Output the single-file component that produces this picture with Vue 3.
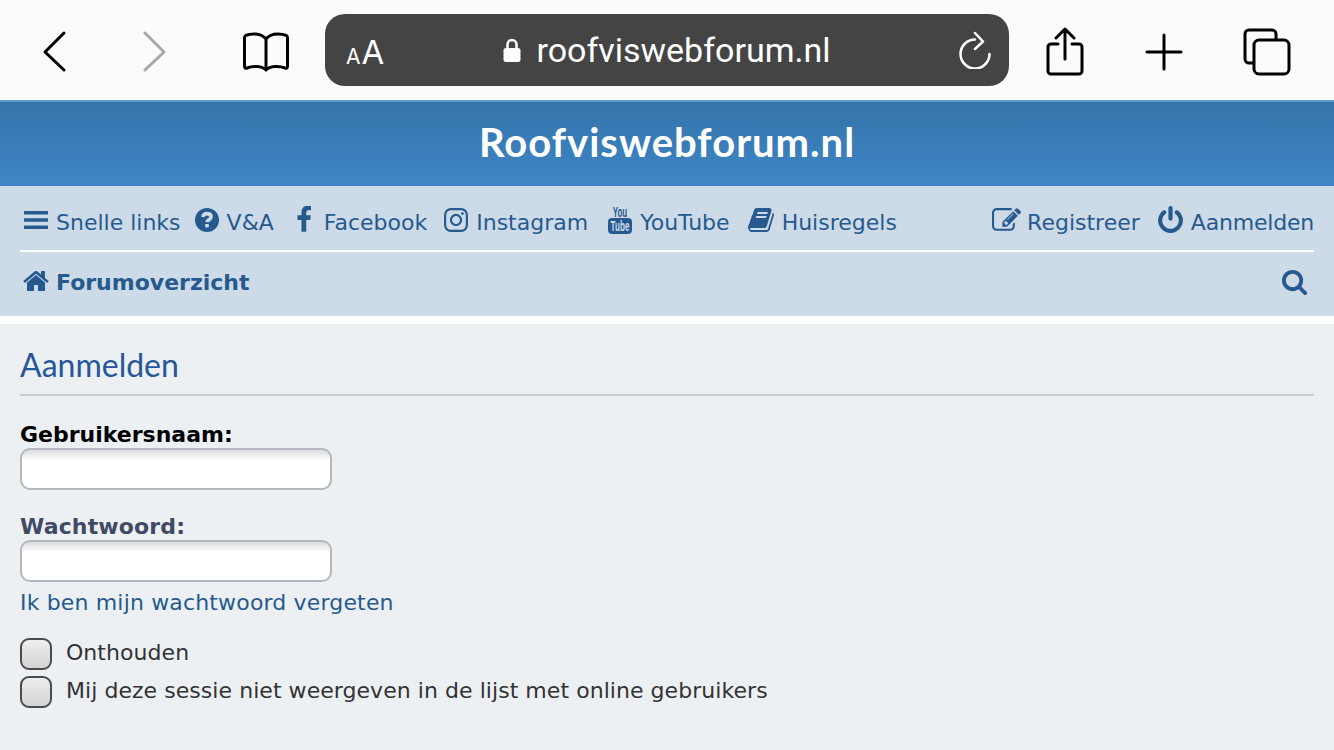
<template>
  <div class="page">
    <div class="toolbar">
      <button class="tool back">
        <svg width="30" height="44" viewBox="0 0 30 44"><path d="M22 3 L3 22 L22 40" /></svg>
      </button>
      <button class="tool forward">
        <svg width="30" height="44" viewBox="0 0 30 44"><path d="M3 3 L22 22 L3 40" /></svg>
      </button>
      <button class="tool book">
        <svg width="46" height="40" viewBox="0 0 46 40">
          <path d="M23 7 C20 3 16 2 11 2 C7 2 5 2.5 2.5 3.5 C1.5 4 1.5 5 1.5 6 V34 C1.5 36 2.5 36.5 4 36 C10 33.5 19 34 23 38 C27 34 36 33.5 42 36 C43.5 36.5 44.5 36 44.5 34 V6 C44.5 5 44.5 4 43.5 3.5 C41 2.5 39 2 35 2 C30 2 26 3 23 7 Z M23 7 V37" />
        </svg>
      </button>
      <div class="urlbar">
        <span class="aa"><small>A</small>A</span>
        <span class="url">
          <svg width="18" height="26" viewBox="0 0 18 26">
            <path class="shackle" d="M4.5 12 V7.5 a4.5 4.5 0 0 1 9 0 V12" />
            <rect x="0.5" y="11" width="17" height="14" rx="2.5" />
          </svg>
          roofviswebforum.nl
        </span>
        <svg class="reload" width="32" height="38" viewBox="0 0 32 38">
          <path d="M16 8.5 A14.5 14.5 0 1 0 30.5 23 M16 2 L24 10.5 L16 18" />
        </svg>
      </div>
      <button class="tool share">
        <svg width="40" height="50" viewBox="0 0 40 50">
          <path d="M13 17 H6 a3 3 0 0 0 -3 3 V44 a3 3 0 0 0 3 3 H34 a3 3 0 0 0 3 -3 V20 a3 3 0 0 0 -3 -3 H27 M20 32 V2 M11 11 L20 2 L29 11" />
        </svg>
      </button>
      <button class="tool plus">
        <svg width="38" height="38" viewBox="0 0 38 38"><path d="M19 2 V36 M2 19 H36" /></svg>
      </button>
      <button class="tool tabs">
        <svg width="48" height="48" viewBox="0 0 48 48">
          <path d="M10 35 H6 a4 4 0 0 1 -4 -4 V6 a4 4 0 0 1 4 -4 H29 a4 4 0 0 1 4 4 V11" />
          <rect x="11" y="12" width="35" height="34" rx="5" />
        </svg>
      </button>
    </div>

    <header class="banner">Roofviswebforum.nl</header>

    <nav class="navbar">
      <div class="navrow top">
        <ul class="links">
          <li v-for="item in leftLinks" :key="item.label" :style="{ marginRight: item.after + 'px', gap: item.gap + 'px' }">
            <svg v-if="item.path" class="icon" :style="{ width: item.size + 'px', height: item.size + 'px' }" viewBox="0 0 1792 1792"><path :d="item.path" /></svg>
            <svg v-else-if="item.label === 'V&A'" class="icon" width="24" height="24" viewBox="0 0 24 24">
              <circle cx="12" cy="12" r="12" />
              <path class="q" d="M7.8 9 c0.5 -2.4 2.2 -3.4 4.2 -3.4 c2.4 0 4 1.3 4 3.3 c0 3 -3.7 2.8 -4 5.2" />
              <rect class="qdot" x="10.2" y="16" width="3.6" height="3.4" />
            </svg>
            <svg v-else class="icon" width="24" height="28" viewBox="0 0 24 28">
              <text class="yt-you" transform="translate(12 11) scale(.57 1)" text-anchor="middle">You</text>
              <rect x="0" y="12" width="24" height="16" rx="4" />
              <text class="yt-tube" transform="translate(12 25) scale(.58 1)" text-anchor="middle">Tube</text>
            </svg>
            <span>{{ item.label }}</span>
          </li>
        </ul>
        <ul class="links right">
          <li v-for="item in rightLinks" :key="item.label" :style="{ gap: item.gap + 'px' }">
            <svg class="icon" :style="{ width: item.size + 'px', height: item.size + 'px' }" viewBox="0 0 1792 1792"><path :d="item.path" /></svg>
            <span :class="item.textClass">{{ item.label }}</span>
          </li>
        </ul>
      </div>
      <div class="navrow bottom">
        <a class="crumb">
          <svg class="icon" width="28" height="28" viewBox="0 0 1792 1792"><path :d="icons.home" /></svg>
          Forumoverzicht
        </a>
        <svg class="icon search" width="27" height="27" viewBox="0 0 1792 1792"><path :d="icons.search" /></svg>
      </div>
    </nav>

    <main class="content">
      <h2>Aanmelden</h2>
      <form class="login" @submit.prevent>
        <label class="field-label black">Gebruikersnaam:</label>
        <input class="text" type="text" />
        <label class="field-label slate second">Wachtwoord:</label>
        <input class="text" type="password" />
        <a class="forgot">Ik ben mijn wachtwoord vergeten</a>
        <div class="checks">
          <label v-for="c in checks" :key="c" class="check">
            <span class="box"></span>
            {{ c }}
          </label>
        </div>
      </form>
    </main>
  </div>
</template>

<script setup>
const icons = {
  facebook: 'M1343 12v264h-157q-86 0-116 36t-30 96v189h293l-39 296h-254v759h-306v-759h-255v-296h255v-218q0-186 104-288.5t277-102.5q147 0 228 12z',
  instagram: 'M1152 896q0-106-75-181t-181-75-181 75-75 181 75 181 181 75 181-75 75-181zm138 0q0 164-115 279t-279 115-279-115-115-279 115-279 279-115 279 115 115 279zm108-410q0 38-27 65t-65 27-65-27-27-65 27-65 65-27 65 27 27 65zm-502-220q-7 0-76.5-.5t-105.5 0-96.5 3-103 10-71.5 18.5q-50 20-88 58t-58 88q-11 29-18.5 71.5t-10 103-3 96.5 0 105.5.5 76.5-.5 76.5 0 105.5 3 96.5 10 103 18.5 71.5q20 50 58 88t88 58q29 11 71.5 18.5t103 10 96.5 3 105.5 0 76.5-.5 76.5.5 105.5 0 96.5-3 103-10 71.5-18.5q50-20 88-58t58-88q11-29 18.5-71.5t10-103 3-96.5 0-105.5-.5-76.5.5-76.5 0-105.5-3-96.5-10-103-18.5-71.5q-20-50-58-88t-88-58q-29-11-71.5-18.5t-103-10-96.5-3-105.5 0-76.5.5zm768 630q0 229-5 317-10 208-124 322t-322 124q-88 5-317 5t-317-5q-208-10-322-124t-124-322q-5-88-5-317t5-317q10-208 124-322t322-124q88-5 317-5t317 5q208 10 322 124t124 322q5 88 5 317z',
  book: 'M1703 478q40 57 18 129l-275 906q-19 64-76.5 107.5t-122.5 43.5h-923q-77 0-148.5-53.5t-99.5-131.5q-24-67-2-127 0-4 3-27t4-37q1-8-3-21.5t-3-19.5q2-11 8-21t16.5-23.5 16.5-23.5q23-38 45-91.5t30-91.5q3-10 .5-30t-.5-28q3-11 17-28t17-23q21-36 42-92t25-90q1-9-2.5-32t.5-28q4-13 22-30.5t22-22.5q19-26 42.5-84.5t27.5-96.5q1-8-3-25.5t-2-26.5q2-8 9-18t18-23 17-21q8-12 16.5-30.5t15-35 16-36 19.5-32 26.5-23.5 36-11.5 47.5 5.5l-1 3q38-9 51-9h761q74 0 114 56t18 130l-274 906q-36 119-71.5 153.5t-128.5 34.5h-869q-27 0-38 15-11 16-1 43 24 70 144 70h923q29 0 56-15.5t35-41.5l300-987q7-22 5-57 38 15 59 43zm-1064 2q-4 13 2 22.5t20 9.5h608q13 0 25.5-9.5t16.5-22.5l21-64q4-13-2-22.5t-20-9.5h-608q-13 0-25.5 9.5t-16.5 22.5zm-83 256q-4 13 2 22.5t20 9.5h608q13 0 25.5-9.5t16.5-22.5l21-64q4-13-2-22.5t-20-9.5h-608q-13 0-25.5 9.5t-16.5 22.5z',
  bars: 'M0 256q0-40 40-40h1712q40 0 40 40v192q0 40-40 40H40q-40 0-40-40zM0 800q0-40 40-40h1712q40 0 40 40v192q0 40-40 40H40q-40 0-40-40zM0 1344q0-40 40-40h1712q40 0 40 40v192q0 40-40 40H40q-40 0-40-40z',
  edit: 'M888 1184l116-116-152-152-116 116v56h96v96h56zm440-720q-16-16-33 1l-350 350q-17 17-1 33t33-1l350-350q17-17 1-33zm80 594v190q0 119-84.5 203.5t-203.5 84.5h-832q-119 0-203.5-84.5t-84.5-203.5v-832q0-119 84.5-203.5t203.5-84.5h832q63 0 117 25 15 7 18 23 3 17-9 29l-49 49q-14 14-32 8-23-6-45-6h-832q-66 0-113 47t-47 113v832q0 66 47 113t113 47h832q66 0 113-47t47-113v-126q0-13 9-22l64-64q15-15 35-7t20 29zm-96-738l288 288-672 672h-288v-288zm444 132l-92 92-288-288 92-92q28-28 68-28t68 28l152 152q28 28 28 68t-28 68z',
  power: 'M1664 896q0 156-61 298t-164 245-245 164-298 61-298-61-245-164-164-245-61-298q0-182 80.5-343t226.5-270q43-32 95.5-25t83.5 50q32 42 24.5 94.5t-49.5 84.5q-98 74-151.5 181t-53.5 228q0 104 40.5 198.5t109.5 163.5 163.5 109.5 198.5 40.5 198.5-40.5 163.5-109.5 109.5-163.5 40.5-198.5q0-121-53.5-228t-151.5-181q-42-32-49.5-84.5t24.5-94.5q31-43 84-50t95 25q146 109 226.5 270t80.5 343zm-640-768v640q0 52-38 90t-90 38-90-38-38-90v-640q0-52 38-90t90-38 90 38 38 90z',
  home: 'M1472 992v480q0 26-19 45t-45 19h-384v-384h-256v384h-384q-26 0-45-19t-19-45v-480q0-1 .5-3t.5-3l575-474 575 474q1 2 1 6zm223-69l-62 74q-8 9-21 11h-3q-13 0-21-7l-692-577-692 577q-12 8-24 7-13-2-21-11l-62-74q-8-10-7-23.5t11-21.5l719-599q32-26 76-26t76 26l244 204v-195q0-14 9-23t23-9h192q14 0 23 9t9 23v408l219 182q10 8 11 21.5t-7 23.5z',
  search: 'M1216 832q0-185-131.5-316.5t-316.5-131.5-316.5 131.5-131.5 316.5 131.5 316.5 316.5 131.5 316.5-131.5 131.5-316.5zm512 832q0 52-38 90t-90 38q-54 0-90-38l-343-342q-179 124-399 124-143 0-273.5-55.5t-225-150-150-225-55.5-273.5 55.5-273.5 150-225 225-150 273.5-55.5 273.5 55.5 225 150 150 225 55.5 273.5q0 220-124 399l343 343q37 37 37 90z'
}

// gap = icon to text, after = space to the next item
const leftLinks = [
  { label: 'Snelle links', path: icons.bars, size: 24, gap: 8, after: 14 },
  { label: 'V&A', gap: 8, after: 16 },
  { label: 'Facebook', path: icons.facebook, size: 28, gap: 6, after: 15 },
  { label: 'Instagram', path: icons.instagram, size: 28, gap: 6, after: 20 },
  { label: 'YouTube', gap: 8, after: 17 },
  { label: 'Huisregels', path: icons.book, size: 28, gap: 7, after: 0 }
]

const rightLinks = [
  { label: 'Registreer', path: icons.edit, size: 29, gap: 6 },
  { label: 'Aanmelden', path: icons.power, size: 29, gap: 6, textClass: 'tight' }
]

const checks = ['Onthouden', 'Mij deze sessie niet weergeven in de lijst met online gebruikers']
</script>

<style>
html, body {
  margin: 0;
  background: #ecf0f3;
}
</style>

<style scoped>
.page {
  width: 1334px;
  height: 750px;
  overflow: hidden;
  display: flex;
  flex-direction: column;
  font-family: "DejaVu Sans", Verdana, sans-serif;
  background: #fff;
}
.toolbar {
  height: 100px;
  flex: none;
  box-sizing: border-box;
  background: #fafbfb;
  display: flex;
  align-items: center;
  position: relative;
}
.tool {
  border: 0;
  padding: 0;
  margin-top: 3px;
  background: none;
  display: flex;
  align-items: center;
  justify-content: center;
}
.tool svg,
.reload {
  fill: none;
  stroke: #000;
  stroke-width: 3;
  stroke-linecap: round;
  stroke-linejoin: round;
}
.back { margin-left: 42px; }
.forward { margin-left: 70px; }
.forward svg { stroke: #a8a8a8; }
.book { margin-left: 71px; }
.urlbar {
  margin-left: 36px;
  width: 684px;
  height: 72px;
  border-radius: 20px;
  background: #444444;
  color: #fff;
  display: flex;
  align-items: center;
  position: relative;
}
.aa {
  position: absolute;
  left: 21px;
  top: 20px;
  font-family: Inter, Roboto, sans-serif;
  font-size: 33px;
  line-height: 36px;
}
.aa small { font-size: 21px; margin-right: 1px; }
.url {
  margin: 0 auto;
  display: flex;
  align-items: center;
  gap: 15px;
  font-family: Roboto, Inter, sans-serif;
  font-size: 34px;
}
.url svg { fill: #fff; }
.url .shackle { fill: none; stroke: #fff; stroke-width: 2.5; }
.reload {
  position: absolute;
  right: 18px;
  top: 17px;
  stroke: #fff;
  stroke-width: 2.5;
}
.share { margin-left: 36px; }
.plus { margin-left: 60px; }
.tabs { margin-left: 60px; }

.banner {
  height: 86px;
  flex: none;
  box-sizing: border-box;
  padding-bottom: 4px;
  border-top: 2px solid #5c9bcb;
  background: linear-gradient(#3374aa, #3f86c6);
  color: #fff;
  font-family: Lato, sans-serif;
  font-size: 40px;
  font-weight: 700;
  letter-spacing: 1px;
  display: flex;
  align-items: center;
  justify-content: center;
}

.navbar {
  height: 130px;
  flex: none;
  box-sizing: border-box;
  padding: 0 20px;
  background: #cddae8;
  color: #265a8e;
}
.navrow {
  display: flex;
  align-items: center;
  justify-content: space-between;
}
.top {
  height: 66px;
  padding-top: 8px;
  border-bottom: 2px solid #fff;
  box-sizing: border-box;
}
.bottom {
  height: 62px;
  padding-bottom: 2px;
  box-sizing: border-box;
}
.links {
  list-style: none;
  margin: 0;
  padding: 0 0 0 4px;
  display: flex;
  font-size: 22px;
}
.links li {
  display: flex;
  align-items: center;
}
.links li .icon { margin-bottom: 4px; }
.links.right { gap: 16px; padding: 0; }
.tight { letter-spacing: -0.2px; }
.icon {
  fill: #265a8e;
  flex: none;
}
.q {
  fill: none;
  stroke: #cddae8;
  stroke-width: 3.6;
}
.qdot { fill: #cddae8; }
.yt-you,
.yt-tube {
  font-family: "Liberation Sans", sans-serif;
  font-weight: bold;
  font-size: 14px;
}
.yt-you { fill: #265a8e; }
.yt-tube { fill: #cddae8; }
.crumb {
  display: flex;
  align-items: center;
  gap: 6px;
  padding-left: 2px;
  font-size: 22px;
  font-weight: bold;
}
.crumb .icon { margin-bottom: 3px; }
.search { margin: 0 6px 2px 0; }

.content {
  flex: 1;
  margin-top: 8px;
  padding: 0 20px;
  background: #ecf0f3;
}
h2 {
  margin: 0;
  height: 72px;
  box-sizing: border-box;
  border-bottom: 2px solid #c9ccd0;
  font-family: Lato, sans-serif;
  font-weight: 400;
  font-size: 32px;
  line-height: 82px;
  color: #26569a;
}
.login {
  display: flex;
  flex-direction: column;
  align-items: flex-start;
}
.field-label {
  margin-top: 24px;
  font-size: 22px;
  font-weight: bold;
  height: 28px;
  line-height: 30px;
}
.field-label.second { margin-top: 22px; }
.black { color: #000; }
.slate { color: #404a65; letter-spacing: 0.15px; }
.text {
  width: 312px;
  height: 42px;
  box-sizing: border-box;
  border: 2px solid #b4b7bd;
  border-radius: 10px;
  background: linear-gradient(#dcdcdc, #fff 10px);
  outline: none;
}
.forgot {
  margin-top: 7px;
  font-size: 22px;
  line-height: 28px;
  letter-spacing: 0.16px;
  color: #265a8e;
}
.checks {
  margin-top: 17px;
  display: flex;
  flex-direction: column;
  gap: 2px;
}
.check {
  display: flex;
  align-items: center;
  gap: 14px;
  font-size: 22px;
  letter-spacing: 0.05px;
  color: #333;
}
.box {
  width: 32px;
  height: 32px;
  margin-top: 4px;
  box-sizing: border-box;
  border: 2px solid #4a4a4a;
  border-radius: 9px;
  background: linear-gradient(#eeeeee, #d2d3d5);
}
</style>
